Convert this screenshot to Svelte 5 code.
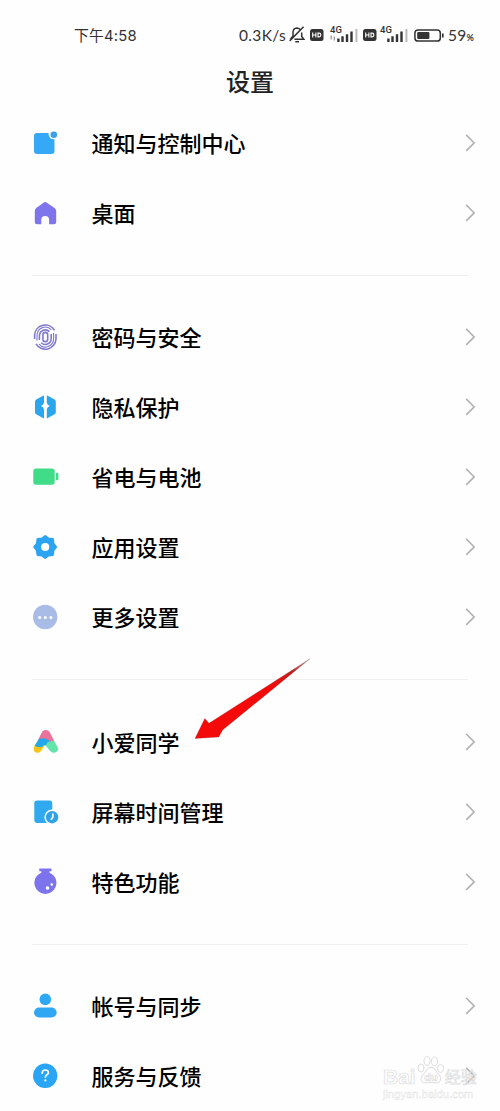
<script>
  const groups = [
    [['notice', '通知与控制中心'], ['home', '桌面']],
    [['finger', '密码与安全'], ['privacy', '隐私保护'], ['battery', '省电与电池'], ['gear', '应用设置'], ['more', '更多设置']],
    [['assistant', '小爱同学'], ['screen', '屏幕时间管理'], ['flask', '特色功能']],
    [['account', '帐号与同步'], ['help', '服务与反馈']]
  ];
</script>

{#snippet icon(name)}
  <svg class="icon" width="30" height="30" viewBox="0 0 30 30" aria-hidden="true">
    {#if name === 'notice'}
      <path fill="#35a9f5" d="M7 5H18.6A5.2 5.2 0 0 0 24.5 11.2V23a3 3 0 0 1-3 3H7a3 3 0 0 1-3-3V8a3 3 0 0 1 3-3Z" />
      <circle cx="23.8" cy="6.8" r="3.3" fill="#3d9fe8" />
    {:else if name === 'home'}
      <path fill="#7e75ec" d="M13.2 4.9q2-1.6 4 0l7.4 5.2q1.6 1.2 1.6 3.2v10.6q0 2.3-2.3 2.3h-4.8v-4.2a3.9 3.9 0 0 0-7.8 0v4.2H7.1q-2.3 0-2.3-2.3V13.3q0-2 1.4-3.2Z" />
    {:else if name === 'finger'}
      <g fill="none" stroke="#8079ce" stroke-width="1.6">
        <rect x="12.9" y="10.4" width="4.8" height="9.2" rx="2.4" />
        <path d="M9.4 18V13.2a5.9 5.9 0 0 1 10-3.6M21.2 12v4.8a5.9 5.9 0 0 1-10 4" />
        <path d="M4.6 17V13a10.7 10.7 0 0 1 20-4.6M26 12v5a10.7 10.7 0 0 1-20 4.8" />
        <path stroke-width="1.1" d="M7 18.5V13a8.3 8.3 0 0 1 14.4-5.2M23.6 11v5.8a8.3 8.3 0 0 1-14.6 5.3" />
      </g>
    {:else if name === 'privacy'}
      <path fill="#2ba5ec" d="M14 3.5V10.8Q13.5 13.1 10.9 14 13.5 14.9 14 17.2V26.4q-.5 0-1-.3l-6.8-3.8Q5 21.6 5 20.2V9.5q0-1.2 1.2-2L13 3.7q.5-.2 1-.2Z" />
      <path fill="#2ba5ec" d="M16.8 3.5V10.8Q17.3 13.1 19.9 14 17.3 14.9 16.8 17.2V26.4q.5 0 1-.3l6.8-3.8q1.2-.7 1.2-2.1V9.5q0-1.2-1.2-2l-6.8-3.8q-.5-.2-1-.2Z" />
    {:else if name === 'battery'}
      <rect x="3.3" y="6.5" width="21.4" height="16.3" rx="2.8" fill="#40dc88" />
      <rect x="25.9" y="10.7" width="2.5" height="7.6" rx="1.2" fill="#40dc88" />
    {:else if name === 'gear'}
      <path fill="#2ba4f2" stroke="#2ba4f2" stroke-width="2" stroke-linejoin="round" d="M15.2 4L18.5 6.6L22.9 7.1L23.5 11.6L26.2 15L23.5 18.4L22.9 22.9L18.5 23.4L15.2 26L11.9 23.4L7.5 22.9L6.9 18.4L4.2 15L6.9 11.6L7.5 7.1L11.9 6.6Z" />
      <circle cx="15.2" cy="15" r="4.1" fill="#fff" />
    {:else if name === 'more'}
      <circle cx="15.2" cy="15" r="12.2" fill="#a9bce6" />
      <g fill="#fff"><circle cx="9.7" cy="15.4" r="1.5" /><circle cx="15.3" cy="15.4" r="1.5" /><circle cx="20.9" cy="15.4" r="1.5" /></g>
    {:else if name === 'assistant'}
      <path fill="#f6c51d" d="M4.4 19 6.6 15.5l8.2 2.5L11 24q-1.8 2.4-4.6 1.7Q2.1 24.2 4.4 19Z" />
      <path fill="#63e4ad" d="M15 17.8q3.5-4.9 8.7-4.9l3.9 7q1.5 4.2-2.6 5.6-2.9.8-4.9-1.4Z" />
      <path fill="#e8739b" d="M8 13 11.4 6.3q1.5-3.2 4.4-3.2t4.5 3.2L24 13.4 18.5 15Q13 11.5 8 13Z" />
      <path fill="#24a9ed" d="M4.8 18.8 8.4 12.4q5.3-2.6 10 .7L19.6 14Q17 15.4 15.8 18.2q-1.8-.3-3.4 1.2Q8.2 21 4.8 18.8Z" />
    {:else if name === 'screen'}
      <rect x="4.3" y="3.5" width="18" height="22.4" rx="2.8" fill="#30a9f0" />
      <circle cx="22.1" cy="20.2" r="7.7" fill="#fff" />
      <circle cx="22.1" cy="20.2" r="6.2" fill="#30a2e8" />
      <path d="M22.8 17.1v3.2l-1.5 2" fill="none" stroke="#fff" stroke-width="1.7" stroke-linecap="round" />
    {:else if name === 'flask'}
      <path fill="#7d74ed" d="M9.3 1.6h12.2v2.6h-2v1.5a11 11 0 1 1-8.2 0V4.2h-2Z" />
      <circle cx="17.5" cy="21" r="1.8" fill="#fff" /><circle cx="21.8" cy="17.5" r="1.2" fill="#fff" />
    {:else if name === 'account'}
      <circle cx="15.3" cy="8.4" r="5.8" fill="#30a7f2" />
      <rect x="4" y="16.4" width="22.7" height="10.2" rx="5.1" fill="#30a7f2" />
    {:else if name === 'help'}
      <circle cx="15.2" cy="14.8" r="12.2" fill="#2aa4f4" />
      <path d="M12.2 12.2q0-3.2 3.1-3.2t3.1 2.7q0 1.2-1.7 2.2-1.3.8-1.3 2.2" fill="none" stroke="#fff" stroke-width="1.7" stroke-linecap="round" />
      <circle cx="15.4" cy="19.4" r="1.1" fill="#fff" />
    {/if}
  </svg>
{/snippet}

{#snippet hd()}
  <svg class="hd" width="14" height="12" viewBox="0 0 14 12" aria-hidden="true">
    <rect width="13.5" height="12" rx="2.5" fill="#333" />
    <path d="M2.7 3.6v4.8M5.9 3.6v4.8M2.7 6h3.2M8 4.1v3.8h1a1.9 1.9 0 0 0 0-3.8Z" fill="none" stroke="#fff" stroke-width="1.1" />
  </svg>
{/snippet}

{#snippet signal(arrows)}
  <svg class="signal" width="28" height="22" viewBox="0 -4 28 22" aria-hidden="true">
    <text x="0" y="7" class="net">4G</text>
    {#if arrows}<path d="M1.2 9.5v4M4.3 10.5v4" stroke="#999" stroke-width="1.3" />{/if}
    <path d="M8.4 12.5V16M12.5 10.3V16M17 8.2V16M21.5 5.5V16" stroke="#333" stroke-width="2.4" />
    <path d="M26.4 3V16" stroke="#bbb" stroke-width="2" />
  </svg>
{/snippet}

<main class="phone">
  <header class="status">
    <span class="time">下午4:58</span>
    <div class="indicators">
      <span class="speed">0.3K/s</span>
      <svg class="bell" width="16" height="17" viewBox="0 0 16 17" fill="none" stroke="#333" stroke-width="1.5" aria-hidden="true">
        <path d="M4 10.5V6.4Q4.2 2.3 7.9 2.1q2.1 0 3.1 1.4M12.7 6.5v4l2.2 2.8H5.4M.7 14.9 14.6 .8M6.3 15.7h3.7M4 10.1 1.5 13" />
      </svg>
      {@render hd()}
      {@render signal(true)}
      {@render hd()}
      {@render signal(false)}
      <svg class="cell" width="31" height="13" viewBox="0 0 31 13" aria-hidden="true">
        <rect x=".9" y=".9" width="25.4" height="11.2" rx="3.2" fill="none" stroke="#333" stroke-width="1.5" />
        <rect x="3.2" y="3.1" width="12.2" height="6.8" rx="1" fill="#333" />
        <path d="M28.8 4.5v4" stroke="#333" stroke-width="1.7" />
      </svg>
      <span class="level">59<small>%</small></span>
    </div>
  </header>
  <h1>设置</h1>
  <div class="list">
    {#each groups as rows}
      <section>
        {#each rows as [name, label]}
          <div class="row">
            {@render icon(name)}
            <span class="label">{label}</span>
            <svg class="chevron" width="12" height="20" viewBox="0 0 12 20" fill="none" stroke="#b3b3b3" stroke-width="1.6" aria-hidden="true"><path d="M1.2 1.9 9.2 9.9 1.2 17.9" /></svg>
          </div>
        {/each}
      </section>
    {/each}
  </div>
  <svg class="pointer" width="120" height="86" viewBox="0 0 120 86" aria-hidden="true">
    <defs>
      <linearGradient id="tip" gradientUnits="userSpaceOnUse" x1="76" y1="28" x2="116" y2="2">
        <stop offset="0" stop-color="#f50a0a" /><stop offset=".55" stop-color="#bd2020" /><stop offset="1" stop-color="#bbb" />
      </linearGradient>
    </defs>
    <path d="M1 82.5 10.8 62.5 15 67.2 116 2.7 28.6 74 24.8 81Z" fill="url(#tip)" stroke="#6b1111" stroke-opacity=".35" stroke-width=".6" />
  </svg>
  <div class="watermark">
    <div class="brand">
      <span>Bai</span>
      <svg width="29" height="32" viewBox="0 0 29 32" aria-hidden="true">
        <g fill="#fff" stroke="#ddd"><ellipse cx="5" cy="13" rx="3" ry="4" /><ellipse cx="11" cy="6" rx="3" ry="4.3" /><ellipse cx="18.5" cy="6.3" rx="3" ry="4.3" /><ellipse cx="24.5" cy="13.5" rx="3" ry="4" /><path d="M15 12q3 0 5 4l4 5q2 6-3 7-6-1-12 0-6-1-3-7l4-5q2-4 5-4Z" /></g>
        <text x="8.3" y="25.5" class="du">du</text>
      </svg>
      <span class="cn">经验</span>
    </div>
    <div class="url">jingyan.baidu.com</div>
  </div>
</main>

<style>
  :global(body) { background: #fff; }
  .phone {
    position: relative;
    width: 500px;
    height: 1111px;
    overflow: hidden;
    background: #fefefe;
    color: #000;
    font-family: "Noto Sans CJK SC", sans-serif;
  }
  .status {
    box-sizing: border-box;
    height: 58px;
    padding: 12px 25px 0 74px;
    display: flex;
    align-items: center;
    justify-content: space-between;
    color: #333;
    white-space: nowrap;
  }
  .time { font-family: Inter, "Noto Sans CJK SC", sans-serif; font-size: 14.8px; letter-spacing: .2px; margin-top: -1px; }
  .indicators { display: flex; align-items: center; font-family: Lato, sans-serif; }
  .speed { font-size: 15.5px; letter-spacing: .35px; width: 50px; }
  .bell { margin: -2px 5px 0 0; }
  .hd { margin-right: 6px; }
  .signal { margin: -4px 5px 0 0; overflow: visible; }
  .signal + .hd { margin-right: 3px; }
  .signal + .cell { margin-left: 1px; }
  .net { font: 500 9.5px Roboto, sans-serif; fill: #333; }
  .level { width: 27px; margin-left: 3px; font-size: 15.5px; letter-spacing: .2px; }
  .level small { font-size: 9px; font-weight: bold; }
  h1 {
    height: 44px;
    margin: 0;
    display: flex;
    align-items: center;
    justify-content: center;
    font-size: 24px;
    font-weight: 500;
    color: #222;
  }
  .list { padding-top: 6px; }
  section + section::before {
    content: "";
    display: block;
    height: 1px;
    margin: 27px 32px 26.33px;
    background: #f0f0f0;
  }
  .row {
    height: 70px;
    padding: 0 23px 0 30px;
    display: flex;
    align-items: center;
  }
  .label {
    flex: 1;
    margin: -2px 0 0 31.5px;
    font-size: 22px;
    font-weight: 500;
    line-height: 32px;
  }
  .pointer { position: absolute; left: 194px; top: 656px; }
  .watermark {
    position: absolute;
    left: 383px;
    top: 1055px;
    color: rgba(255, 255, 255, .3);
    font-family: "Liberation Sans", "Noto Sans CJK SC", sans-serif;
    -webkit-text-stroke: .7px #ddd;
  }
  .brand { display: flex; align-items: center; height: 32px; font-size: 21px; font-weight: bold; }
  .brand span { margin-top: 12px; }
  .brand .cn { font-size: 16px; font-weight: 400; margin: 9px 0 0; }
  .du { font: bold 11px "Liberation Sans", sans-serif; fill: #fff; stroke: #ddd; stroke-width: .7px; }
  .url { font-size: 11px; line-height: 14px; letter-spacing: .1px; -webkit-text-stroke: .4px #e2e2e2; }
</style>
